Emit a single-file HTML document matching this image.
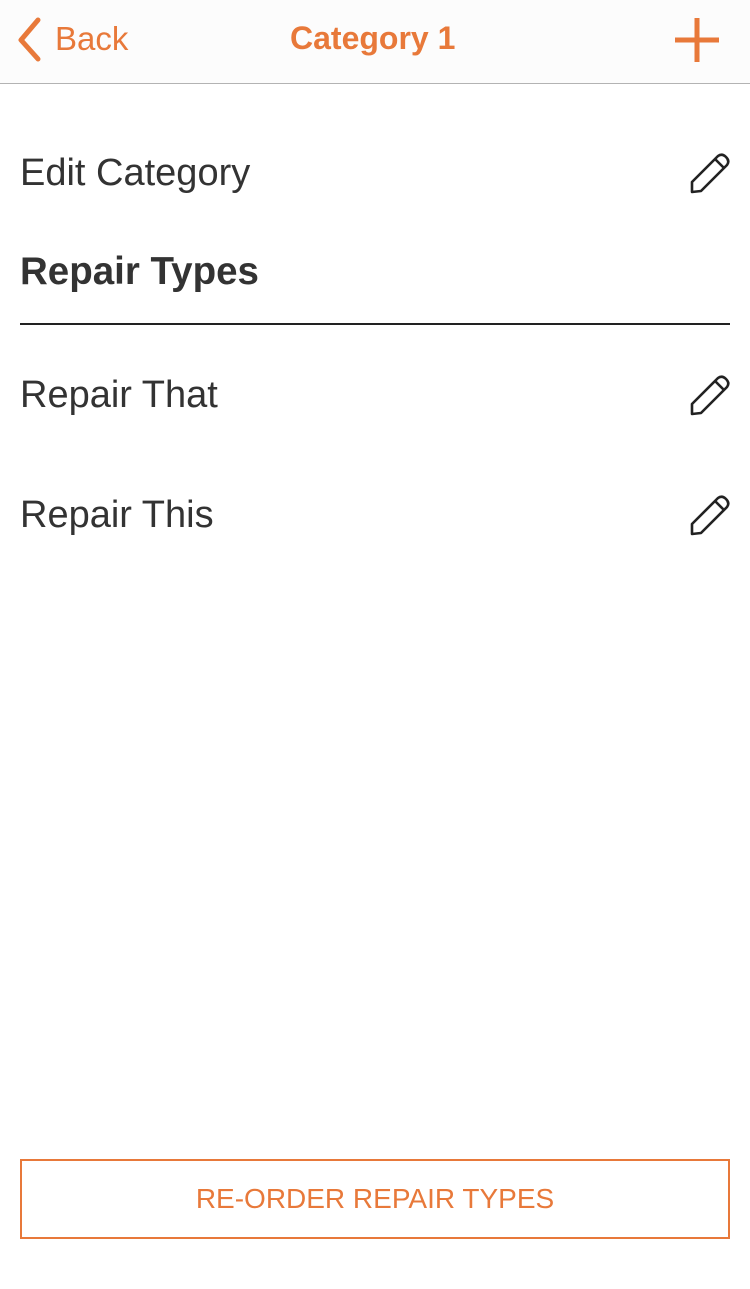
<!DOCTYPE html>
<html><head><style>
body{margin:0;width:750px;height:1289px;background:#fff;font-family:"Liberation Sans",sans-serif;position:relative;overflow:hidden}
.hdr{position:absolute;left:0;top:0;width:750px;height:83px;background:#fcfcfc;border-bottom:1px solid #b3b3b3}
.o{color:#e8793a}
.t{position:absolute;white-space:nowrap}
.pen{position:absolute;width:44px;height:44px}
</style></head><body>
<div class="hdr">
<svg style="position:absolute;left:12px;top:16px" width="32" height="48" viewBox="0 0 32 48"><path d="M26 4 L9 24 L26 43" fill="none" stroke="#e8793a" stroke-width="5" stroke-linecap="round" stroke-linejoin="round"/></svg>
<div class="t o" style="left:55px;top:20px;font-size:33px">Back</div>
<div class="t o" style="left:290px;top:20px;font-size:32px;font-weight:bold">Category 1</div>
<svg style="position:absolute;left:673px;top:17px" width="48" height="46"><path d="M24 1V45M2 23H46" stroke="#e8793a" stroke-width="5"/></svg>
</div>
<div class="t" style="left:20px;top:152px;font-size:38px;color:#333">Edit Category</div>
<div class="t" style="left:20px;top:250px;font-size:38.5px;color:#333;font-weight:bold">Repair Types</div>
<div style="position:absolute;left:20px;top:323px;width:710px;height:2px;background:#222"></div>
<div class="t" style="left:20px;top:374px;font-size:38px;color:#333">Repair That</div>
<div class="t" style="left:20px;top:494px;font-size:38px;color:#333">Repair This</div>
<svg class="pen" style="left:688px;top:152px" viewBox="0 0 44 44"><g fill="none" stroke="#222" stroke-width="2.6" stroke-linejoin="round"><path d="M4 30 L30 4 Q34 1 38 5 Q42 9 39 13 L13 39 L4 40 Z"/><path d="M27 7 L36 16"/></g></svg>
<svg class="pen" style="left:688px;top:374px" viewBox="0 0 44 44"><g fill="none" stroke="#222" stroke-width="2.6" stroke-linejoin="round"><path d="M4 30 L30 4 Q34 1 38 5 Q42 9 39 13 L13 39 L4 40 Z"/><path d="M27 7 L36 16"/></g></svg>
<svg class="pen" style="left:688px;top:494px" viewBox="0 0 44 44"><g fill="none" stroke="#222" stroke-width="2.6" stroke-linejoin="round"><path d="M4 30 L30 4 Q34 1 38 5 Q42 9 39 13 L13 39 L4 40 Z"/><path d="M27 7 L36 16"/></g></svg>
<div style="position:absolute;left:20px;top:1159px;width:706px;height:76px;border:2px solid #e8793a;display:flex;align-items:center;justify-content:center;color:#e8793a;font-size:28px">RE-ORDER REPAIR TYPES</div>
</body></html>
